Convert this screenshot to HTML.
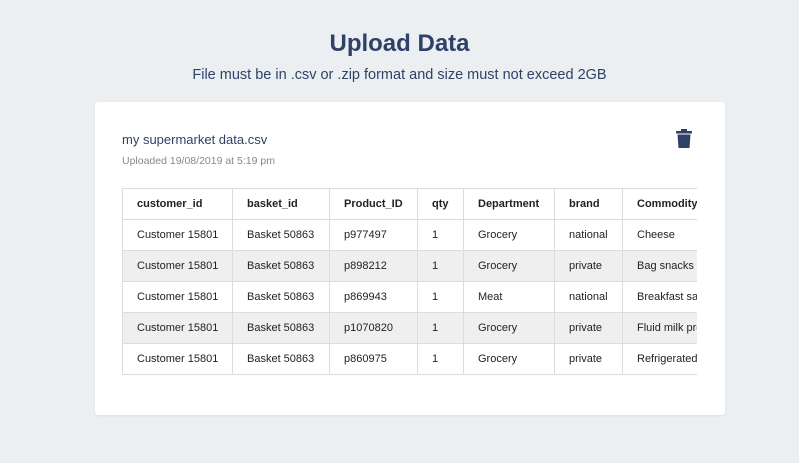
<!DOCTYPE html>
<html><head><style>
body{margin:0;width:799px;height:463px;background:#ebeff2;font-family:"Liberation Sans",sans-serif;position:relative;overflow:hidden}
h1{position:absolute;top:30px;left:0;width:799px;margin:0;text-align:center;font-size:24px;color:#2f4266;font-weight:bold}
.sub{position:absolute;top:67px;left:0;width:799px;text-align:center;font-size:14.5px;color:#2f4266}
.card{position:absolute;left:95px;top:102px;width:630px;height:313px;background:#fff;border-radius:3px;box-shadow:0 1px 2px rgba(0,0,0,.06)}
.fn{position:absolute;left:27px;top:30px;font-size:13px;color:#2f4266}
.up{position:absolute;left:27px;top:53px;font-size:10.5px;color:#888}
.tw{position:absolute;left:27px;top:86px;width:575px;overflow:hidden}
table{border-collapse:collapse;font-size:11px;color:#222;white-space:nowrap;table-layout:fixed;width:620px}
td,th{border:1px solid #dcdcdc;height:30px;padding:0 0 0 14px;text-align:left;overflow:hidden}
th{font-weight:bold}
tr:nth-child(odd) td{background:#efefef}
.trash{position:absolute;left:580px;top:26px}
</style></head><body>
<h1>Upload Data</h1>
<div class="sub">File must be in .csv or .zip format and size must not exceed 2GB</div>
<div class="card">
<div class="fn">my supermarket data.csv</div>
<div class="up">Uploaded 19/08/2019 at 5:19 pm</div>
<svg class="trash" width="18" height="22" viewBox="0 0 18 22"><rect x="1" y="3" width="16" height="2.5" rx="0.5" fill="#2f4266"/><rect x="6" y="1" width="6" height="2.5" fill="#2f4266"/><path d="M2.5 6.5h13l-1 13.5H3.5z" fill="#2f4266"/></svg>
<div class="tw"><table>
<colgroup><col style="width:110px"><col style="width:97px"><col style="width:88px"><col style="width:46px"><col style="width:91px"><col style="width:68px"><col style="width:120px"></colgroup>
<tr><th>customer_id</th><th>basket_id</th><th>Product_ID</th><th>qty</th><th>Department</th><th>brand</th><th>Commodity</th></tr>
<tr><td>Customer 15801</td><td>Basket 50863</td><td>p977497</td><td>1</td><td>Grocery</td><td>national</td><td>Cheese</td></tr>
<tr><td>Customer 15801</td><td>Basket 50863</td><td>p898212</td><td>1</td><td>Grocery</td><td>private</td><td>Bag snacks</td></tr>
<tr><td>Customer 15801</td><td>Basket 50863</td><td>p869943</td><td>1</td><td>Meat</td><td>national</td><td>Breakfast sausage</td></tr>
<tr><td>Customer 15801</td><td>Basket 50863</td><td>p1070820</td><td>1</td><td>Grocery</td><td>private</td><td>Fluid milk products</td></tr>
<tr><td>Customer 15801</td><td>Basket 50863</td><td>p860975</td><td>1</td><td>Grocery</td><td>private</td><td>Refrigerated items</td></tr>
</table></div>
</div>
</body></html>
